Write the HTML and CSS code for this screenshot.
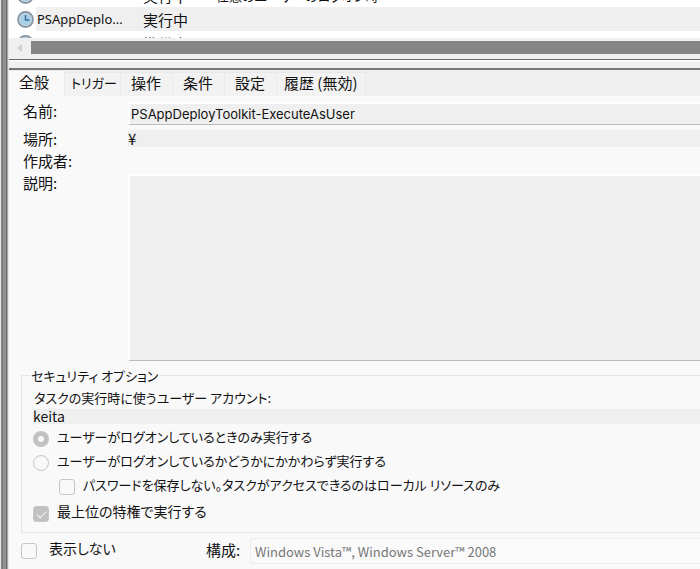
FILE: index.html
```html
<!DOCTYPE html>
<html lang="ja">

<head>
    <meta charset="UTF-8">
    <meta name="viewport" content="width=device-width, initial-scale=1.0">
    <title>タスク スケジューラ</title>
    <link rel="stylesheet" href="styles.css">
</head>

<body>
    <svg class="defs" width="0" height="0">
        <symbol id="clock" viewBox="0 0 17 17">
            <circle cx="8.5" cy="8.5" r="7.6" fill="#a9c9de" stroke="#8794a0" stroke-width="1.6" />
            <circle cx="8.5" cy="8.5" r="5.8" fill="#a9d0e4" stroke="#c4d6e0" />
            <path d="M8.5 4v5h4" fill="none" stroke="#39699b" stroke-width="1.4" />
        </symbol>
    </svg>
    <div class="window">
        <div class="splitter"></div>
        <div class="panes">
            <!-- タスク一覧 -->
            <section class="list-pane">
                <div class="list-view">
                    <table class="tasks">
                        <tr>
                            <td class="icon"><svg class="clock"><use href="#clock" /></svg></td>
                            <td class="name">PSTVDSerr. 12...</td>
                            <td class="state">実行中</td>
                            <td>任意のユーザーのログオン時</td>
                        </tr>
                        <tr class="selected">
                            <td class="icon"><svg class="clock"><use href="#clock" /></svg></td>
                            <td class="name">PSAppDeplo...</td>
                            <td class="state">実行中</td>
                            <td></td>
                        </tr>
                        <tr>
                            <td class="icon"><svg class="clock"><use href="#clock" /></svg></td>
                            <td class="name"></td>
                            <td class="state">準備完了</td>
                            <td>任意のユーザーのログオン時</td>
                        </tr>
                    </table>
                </div>
                <div class="scrollbar">
                    <button class="arrow" aria-label="左へスクロール"></button>
                    <div class="thumb"></div>
                </div>
            </section>

            <!-- タスクの詳細 -->
            <section class="detail-pane">
                <div class="tabs" role="tablist">
                    <button class="tab active" role="tab">全般</button>
                    <button class="tab kana" role="tab">トリガー</button>
                    <button class="tab" role="tab">操作</button>
                    <button class="tab" role="tab">条件</button>
                    <button class="tab" role="tab">設定</button>
                    <button class="tab" role="tab">履歴 (無効)</button>
                </div>
                <form class="general">
                    <div class="fields">
                        <label for="name">名前:</label>
                        <input type="text" id="name" class="box" value="PSAppDeployToolkit-ExecuteAsUser" readonly>
                        <label for="place">場所:</label>
                        <input type="text" id="place" class="plain" value="¥" readonly>
                        <span>作成者:</span>
                        <span></span>
                        <label for="desc">説明:</label>
                        <textarea id="desc" class="box" readonly></textarea>
                    </div>

                    <fieldset class="security">
                        <legend>セキュリティ オプション</legend>
                        <label class="account" for="account">タスクの実行時に使うユーザー アカウント:</label>
                        <input type="text" id="account" class="plain" value="keita" readonly>
                        <label class="option kana"><input type="radio" name="logon" checked disabled><span>ユーザーがログオンしているときのみ実行する</span></label>
                        <label class="option kana"><input type="radio" name="logon" disabled><span>ユーザーがログオンしているかどうかにかかわらず実行する</span></label>
                        <label class="option kana sub"><input type="checkbox" disabled><span>パスワードを保存しない。タスクがアクセスできるのはローカル リソースのみ</span></label>
                        <label class="option top-level"><input type="checkbox" checked disabled><span>最上位の特権で実行する</span></label>
                    </fieldset>

                    <div class="bottom">
                        <label class="option"><input type="checkbox" disabled><span>表示しない</span></label>
                        <label for="config">構成:</label>
                        <select id="config" disabled>
                            <option>Windows Vista™, Windows Server™ 2008</option>
                        </select>
                    </div>
                </form>
            </section>
        </div>
    </div>
</body>

</html>
```
FILE: styles.css
```css
* {
    box-sizing: border-box;
}

body {
    margin: 0;
    background: #f9f9f9;
    color: #111;
    font-family: "Noto Sans CJK JP", sans-serif;
    font-size: 15px;
    line-height: 17px;
    font-feature-settings: "palt";
    overflow: hidden;
}

input,
textarea,
select,
button {
    margin: 0;
    border: 0;
    border-radius: 0;
    color: inherit;
    font: inherit;
    font-feature-settings: inherit;
}

.defs {
    display: none;
}

.window {
    display: flex;
    min-height: 100vh;
}

.splitter {
    flex: 0 0 9px;
    background: linear-gradient(to right, #e2e2e2 1px, #8a8a8a 1px, #8a8a8a 2px, #777 2px, #777 3px, #909090 3px, #909090 6px, #6b6b6b 6px, #6b6b6b 7px, #a5a5a5 7px, #a5a5a5 8px, #e4e4e4 8px);
}

.panes {
    flex: 1;
    min-width: 0;
}

/* 一覧 */
.list-pane {
    background: #f0f0f0;
    border-bottom: 2px solid #777;
}

.list-pane::after {
    content: "";
    display: block;
    height: 6px;
    border-top: 2px solid #f9f9f9;
}

.list-view {
    height: 38px;
    background: #fff;
    overflow: hidden;
}

/* 一行目が途中までスクロールした状態 */
.tasks {
    width: 100%;
    margin-top: -17px;
    border-collapse: collapse;
    table-layout: fixed;
    white-space: nowrap;
    font-size: 13px;
}

.tasks td {
    height: 24px;
    padding: 0;
}

.tasks .icon {
    width: 27px;
    padding-left: 8px;
}

.tasks .name {
    width: 106px;
    padding-left: 1px;
    font-family: "Noto Sans", sans-serif;
}

.tasks .state {
    width: 74px;
    padding-left: 1px;
    font-size: 15px;
}

.selected td:not(.icon) {
    background: #efefef;
}

.clock {
    display: block;
    width: 17px;
    height: 17px;
}

.scrollbar {
    display: flex;
    align-items: center;
    height: 22px;
    padding-bottom: 2px;
    border-bottom: 1px solid #6b6b6b;
}

.arrow {
    width: 22px;
    padding: 0 8px;
    background: none;
}

.arrow::before {
    content: "";
    display: block;
    width: 0;
    border: 4px solid transparent;
    border-right: 5px solid #cfcfcf;
    border-left: 0;
}

.thumb {
    flex: 1;
    height: 13px;
    background: #858585;
}

/* タブ */
.tabs {
    display: flex;
    align-items: flex-end;
    height: 26px;
    background: #efefef;
}

.tab {
    height: 24px;
    padding: 0 11px 4px 10px;
    background: #f2f2f2;
    border: 1px solid #e9e9e9;
    border-left: 0;
    border-bottom: 0;
}

.tab.active {
    height: 26px;
    padding: 0 15px 4px 10px;
    background: #f9f9f9;
}

.tab.kana {
    padding: 0 3px 4px 6px;
}

.tab:last-child {
    padding: 0 8px 4px 7px;
}

.kana,
.account,
.security legend {
    font-size: 13px;
}

/* 全般 */
.general {
    padding: 6px 0 0 12px;
}

.fields {
    display: grid;
    grid-template-columns: 105px 1fr;
    grid-auto-rows: minmax(17px, auto);
    gap: 5px 0;
    padding-left: 2px;
}

.box {
    width: 100%;
    padding: 0 2px;
    background: #efefef;
    border: 2px solid #fff;
    border-right: 0;
    border-bottom: 1px solid #bbb;
    outline: 0;
}

input.box {
    height: 23px;
    padding: 0 1px 1px;
    font-family: Inter, sans-serif;
    font-size: 13px;
}

textarea.box {
    display: block;
    height: 187px;
    resize: none;
}

.plain {
    display: block;
    width: 100%;
    height: 17px;
    padding: 0;
    background: #efefef;
}

.security {
    min-width: 0;
    margin: 6px 0 0;
    padding: 5px 0 6px 11px;
    border: 1px solid #e4e4e4;
    border-right: 0;
}

.security legend {
    padding: 0 2px;
    margin-left: -4px;
}

.account {
    display: block;
    margin: 0 0 3px 1px;
}

#account {
    height: 15px;
    line-height: 15px;
    margin-bottom: 3px;
    font-size: 14px;
}

.option {
    display: flex;
    align-items: center;
    gap: 8px;
    height: 24px;
    white-space: nowrap;
}

.option:not(.kana) {
    font-size: 14px;
}

.option span {
    padding-bottom: 5px;
}

.option.sub {
    padding-left: 26px;
}

.option.top-level {
    margin-top: 3px;
}

.option input {
    appearance: none;
    flex: none;
    width: 16px;
    height: 16px;
    border: 1px solid #c6c6c6;
    border-radius: 3px;
}

.option input[type="radio"] {
    border-radius: 50%;
}

.option input[type="radio"]:checked {
    border: 5px solid #c1c1c1;
}

.option input[type="checkbox"]:checked {
    background: #c1c1c1;
}

.option input[type="checkbox"]:checked::before {
    content: "";
    display: block;
    width: 8px;
    height: 4px;
    margin: 4px 3px;
    border: solid #f9f9f9;
    border-width: 0 0 1px 1px;
    transform: rotate(-45deg);
}

.bottom {
    display: grid;
    grid-template-columns: 185px 44px 1fr;
    align-items: center;
    padding-top: 5px;
}

.bottom > label:not(.option) {
    padding-bottom: 4px;
}

.bottom .option {
    gap: 12px;
}

.bottom select {
    appearance: none;
    height: 26px;
    padding: 0 4px;
    background: #fafafa;
    border: 1px solid #ededed;
    border-right: 0;
    border-radius: 3px 0 0 3px;
    color: #777;
    font-size: 13px;
    opacity: 1;
}
```
